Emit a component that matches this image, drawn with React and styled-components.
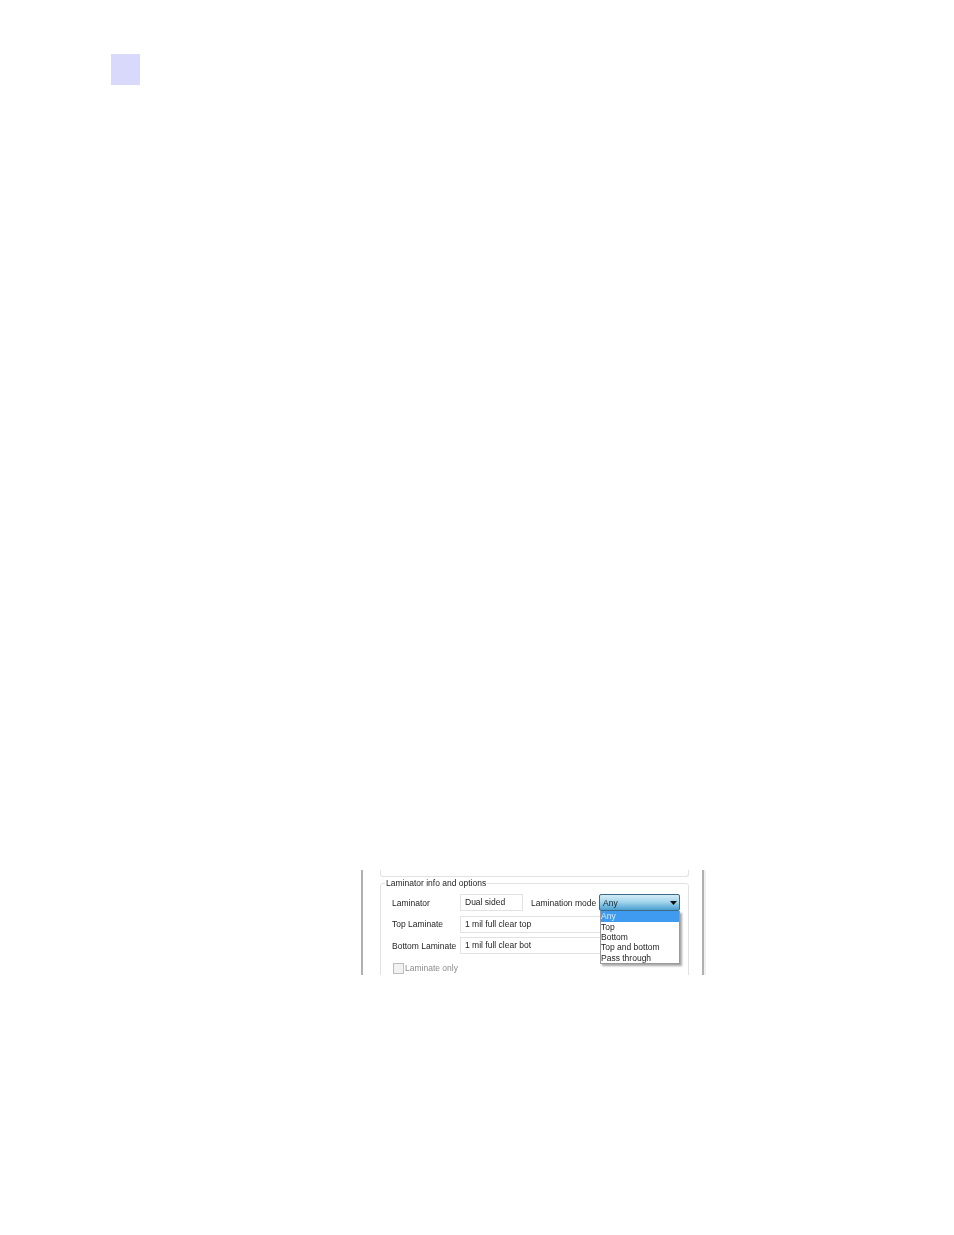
import React from "react";
import styled, { createGlobalStyle } from "styled-components";

const GlobalStyle = createGlobalStyle`
  html, body {
    margin: 0;
    padding: 0;
    background: #fff;
  }
`;

const Page = styled.div`
  width: 954px;
  height: 1235px;
  padding: 54px 0 0 111px;
  box-sizing: border-box;
  overflow: hidden;
`;

const ChapterTab = styled.div`
  width: 29px;
  height: 31px;
  background: #d9d9fb;
`;

const Shot = styled.div`
  width: 343px;
  height: 105px;
  margin: 785px 0 0 250px;
  padding: 0 13px 0 17px;
  box-sizing: border-box;
  overflow: hidden;
  border-left: 2px solid #b0b0b0;
  border-right: 2px solid #b0b0b0;
  box-shadow: 2px 0 0 #f0f0f0;
  font-family: "Liberation Sans", Arial, sans-serif;
  font-size: 8.5px;
  color: #1e1e1e;
  filter: blur(0.25px);
`;

const PrevGroup = styled.div`
  height: 6px;
  border: 1px solid #e2e2e2;
  border-top: 0;
  border-radius: 0 0 3px 3px;
`;

const Group = styled.fieldset`
  position: relative;
  margin: 1px 0 0;
  padding: 5px 0 0 11px;
  height: 120px;
  box-sizing: border-box;
  border: 1px solid #e2e2e2;
  border-radius: 3px;
`;

const Legend = styled.legend`
  margin-left: -7px;
  padding: 0 1px;
  line-height: 11px;
`;

const Row = styled.div`
  display: flex;
  align-items: center;
  height: 17px;
  margin-bottom: 4.5px;
`;

const Label = styled.span`
  width: 68px;
  flex: none;
  white-space: nowrap;
`;

const Field = styled.div`
  width: ${(p) => p.$width}px;
  height: 17px;
  box-sizing: border-box;
  padding-left: 4px;
  line-height: 15px;
  border: 1px solid #e2e2e2;
  flex: none;
  white-space: nowrap;
`;

const ModeLabel = styled.span`
  width: 68px;
  margin-left: 8px;
  flex: none;
  white-space: nowrap;
`;

const Select = styled.div`
  display: flex;
  align-items: center;
  justify-content: space-between;
  width: 81px;
  height: 17px;
  box-sizing: border-box;
  padding: 1px 2px 0 3px;
  border: 1px solid #3d6a85;
  border-radius: 2px;
  background: linear-gradient(#d4ecf6, #a4d6ec 45%, #4b9fd2);
  color: #14222c;
`;

const Arrow = styled.svg`
  width: 7px;
  height: 4px;
  fill: #111;
`;

const DropList = styled.ul`
  position: absolute;
  left: 219px;
  top: 22px;
  width: 80px;
  height: 53px;
  margin: 0;
  padding: 0;
  box-sizing: border-box;
  list-style: none;
  background: #fff;
  border: 1px solid #9a9a9a;
  border-top: 0;
  box-shadow: 2px 2px 2px rgba(0, 0, 0, 0.35);
`;

const DropItem = styled.li`
  height: 10.2px;
  line-height: 10px;
  background: ${(p) => (p.$active ? "#3f9bf0" : "transparent")};
  color: ${(p) => (p.$active ? "#dcecfb" : "#1e1e1e")};
  &:first-child {
    height: 11px;
    line-height: 11px;
  }
`;

const CheckRow = styled.div`
  display: flex;
  align-items: center;
  margin: 8.5px 0 0 1px;
  color: #8c8c8c;
`;

const CheckBox = styled.span`
  width: 11px;
  height: 11px;
  box-sizing: border-box;
  margin-right: 1px;
  border: 1px solid #bdbdbd;
  background: #f2f2f2;
`;

export default function App() {
  return (
    <Page>
      <GlobalStyle />
      <ChapterTab />
      <Shot>
        <PrevGroup />
        <Group>
          <Legend>Laminator info and options</Legend>
          <Row>
            <Label>Laminator</Label>
            <Field $width={63}>Dual sided</Field>
            <ModeLabel>Lamination mode</ModeLabel>
            <Select>
              Any
              <Arrow viewBox="0 0 7 4">
                <path d="M0 0h7L3.5 4z" />
              </Arrow>
            </Select>
          </Row>
          <Row>
            <Label>Top Laminate</Label>
            <Field $width={220}>1 mil full clear top</Field>
          </Row>
          <Row>
            <Label>Bottom Laminate</Label>
            <Field $width={220}>1 mil full clear bot</Field>
          </Row>
          <CheckRow>
            <CheckBox />
            Laminate only
          </CheckRow>
          <DropList>
            <DropItem $active>Any</DropItem>
            <DropItem>Top</DropItem>
            <DropItem>Bottom</DropItem>
            <DropItem>Top and bottom</DropItem>
            <DropItem>Pass through</DropItem>
          </DropList>
        </Group>
      </Shot>
    </Page>
  );
}
